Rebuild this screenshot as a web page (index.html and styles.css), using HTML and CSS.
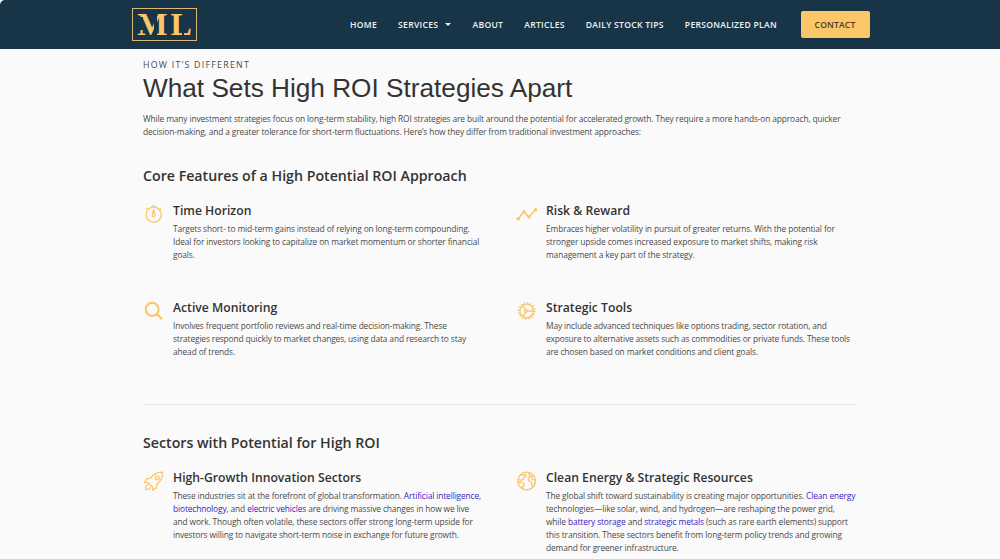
FILE: index.html
```html
<!DOCTYPE html>
<html lang="en">
<head>
  <meta charset="UTF-8">
  <meta name="viewport" content="width=device-width, initial-scale=1.0">
  <title>High ROI Strategies</title>
  <link rel="stylesheet" href="styles.css">
</head>
<body>
  <header class="header">
    <a class="logo" href="#"><span class="logo-m">M</span><span class="logo-l">L</span></a>
    <nav class="nav">
      <a href="#">HOME</a>
      <a href="#">SERVICES <span class="caret"></span></a>
      <a href="#">ABOUT</a>
      <a href="#">ARTICLES</a>
      <a href="#">DAILY STOCK TIPS</a>
      <a href="#">PERSONALIZED PLAN</a>
    </nav>
    <a class="contact-button" href="#">CONTACT</a>
  </header>

  <main class="content">
    <div class="eyebrow">HOW IT’S DIFFERENT</div>
    <h1>What Sets High ROI Strategies Apart</h1>
    <p class="intro">While many investment strategies focus on long-term stability, high ROI strategies are built around the potential for accelerated growth. They require a more hands-on approach, quicker<br>decision-making, and a greater tolerance for short-term fluctuations. Here’s how they differ from traditional investment approaches:</p>

    <h2>Core Features of a High Potential ROI Approach</h2>
    <div class="features">
      <div class="feature">
        <svg class="icon" viewBox="0 0 22 22">
          <circle cx="10.7" cy="11.7" r="7.6"/>
          <path d="M8.7 2.9h4M4.5 6.2L3.3 5M16.9 6.2L18.1 5M10.7 6.5L9.4 11.8a1.4 1.4 0 1 0 2.6 0z"/>
        </svg>
        <div>
          <h3>Time Horizon</h3>
          <p>Targets short- to mid-term gains instead of relying on long-term compounding.<br>Ideal for investors looking to capitalize on market momentum or shorter financial<br>goals.</p>
        </div>
      </div>
      <div class="feature">
        <svg class="icon" viewBox="0 0 22 22">
          <path class="thick" d="M2.2 15.8L8 8.7l5 5.3 6.6-7.2"/>
          <g class="solid"><circle cx="2.2" cy="15.8" r="1.8"/><circle cx="8" cy="8.7" r="1.6"/><circle cx="13" cy="14" r="1.7"/><circle cx="19.6" cy="6.8" r="1.7"/></g>
        </svg>
        <div>
          <h3>Risk &amp; Reward</h3>
          <p>Embraces higher volatility in pursuit of greater returns. With the potential for<br>stronger upside comes increased exposure to market shifts, making risk<br>management a key part of the strategy.</p>
        </div>
      </div>
      <div class="feature">
        <svg class="icon" viewBox="0 0 22 22">
          <circle class="bold" cx="9.2" cy="9.3" r="6.5"/>
          <path class="bold" d="M13.9 14l5.2 5.2"/>
        </svg>
        <div>
          <h3>Active Monitoring</h3>
          <p>Involves frequent portfolio reviews and real-time decision-making. These<br>strategies respond quickly to market changes, using data and research to stay<br>ahead of trends.</p>
        </div>
      </div>
      <div class="feature">
        <svg class="icon" viewBox="0 0 22 22">
          <circle cx="10.7" cy="11" r="6.8"/>
          <circle class="teeth" cx="10.7" cy="11" r="8.1"/>
          <circle cx="10" cy="11" r="1.3"/>
          <path d="M11.3 11h6.2M9.4 9.9L7.2 5.2M9.4 12.1l-2.2 4.7"/>
        </svg>
        <div>
          <h3>Strategic Tools</h3>
          <p>May include advanced techniques like options trading, sector rotation, and<br>exposure to alternative assets such as commodities or private funds. These tools<br>are chosen based on market conditions and client goals.</p>
        </div>
      </div>
    </div>

    <hr>

    <h2>Sectors with Potential for High ROI</h2>
    <div class="features">
      <div class="feature">
        <svg class="icon" viewBox="0 0 22 22">
          <path d="M19.6 2.2C14 2 10.6 4 7.5 8.2L3.6 8.8 1.5 12.4l3.6.2 4.2 4.2.4 3.5 3.5-2.4.7-3.9C18 11 19.8 7.8 19.6 2.2z"/>
          <circle cx="14.2" cy="7.7" r="1.9"/>
          <path d="M5.4 14.4c-2 .2-2.9 2.2-2.9 5.1 3 0 5-.8 5.2-2.8"/>
        </svg>
        <div>
          <h3>High-Growth Innovation Sectors</h3>
          <p>These industries sit at the forefront of global transformation. <a href="#">Artificial intelligence</a>,<br><a href="#">biotechnology</a>, and <a href="#">electric vehicles</a> are driving massive changes in how we live<br>and work. Though often volatile, these sectors offer strong long-term upside for<br>investors willing to navigate short-term noise in exchange for future growth.</p>
        </div>
      </div>
      <div class="feature">
        <svg class="icon" viewBox="0 0 22 22">
          <circle cx="10.6" cy="11" r="8.8"/>
          <path d="M4.5 4.9l2.7.2 2.4-.8.5 2.2-2.3 1-.5 2-2.6.8-2.6-1.1M2.3 12l3.5.3 2.6 1.7-.7 2.1-1.5 1-.2 1.6M13.8 2.9l-1.1 1.9 1.7 1.5-2.2 2.2.7 2.7 2.6.8.3 3.2 1.2 1.7 1.6-2.3.2-2.6M17 5l-1.7 2 1 2.3 2.8.8"/>
        </svg>
        <div>
          <h3>Clean Energy &amp; Strategic Resources</h3>
          <p>The global shift toward sustainability is creating major opportunities. <a href="#">Clean energy</a><br>technologies—like solar, wind, and hydrogen—are reshaping the power grid,<br>while <a href="#">battery storage</a> and <a href="#">strategic metals</a> (such as rare earth elements) support<br>this transition. These sectors benefit from long-term policy trends and growing<br>demand for greener infrastructure.</p>
        </div>
      </div>
    </div>
  </main>
</body>
</html>
```
FILE: styles.css
```css
:root {
  --navy: #183548;
  --gold: #fac668;
  --page: #fafafa;
  --heading: #333333;
  --text: #4a4a4a;
  --link: #3a22c4;
}

* {
  box-sizing: border-box;
}

body {
  margin: 0;
  height: 559px;
  overflow: hidden;
  background: var(--page);
  color: var(--text);
  font-family: "Open Sans", "Noto Sans", sans-serif;
}

a {
  text-decoration: none;
}

.header {
  display: flex;
  align-items: center;
  height: 49px;
  padding-left: 132px;
  background: var(--navy);
  border-top-left-radius: 5px;
}

.logo {
  display: flex;
  justify-content: center;
  align-items: center;
  gap: 3px;
  width: 65px;
  height: 33px;
  border: 1.5px solid #d9b878;
  color: var(--gold);
  font-family: "Liberation Serif", serif;
  font-size: 32px;
  font-weight: bold;
  line-height: 31px;
}

.logo span {
  position: relative;
}

/* stencil gaps in the letters */
.logo-m::before,
.logo-m::after,
.logo-l::after {
  content: '';
  position: absolute;
  background: var(--navy);
}

.logo-m::before {
  top: 8px;
  left: 2px;
  width: 4px;
  height: 13px;
}

.logo-m::after {
  top: 4px;
  left: 17px;
  width: 3px;
  height: 24px;
}

.logo-l::after {
  top: 18px;
  left: 12px;
  width: 2px;
  height: 10px;
}

.nav {
  display: flex;
  gap: 21px;
  width: 450.5px;
  margin-left: 153px;
  font-size: 8.6px;
  font-weight: 600;
  letter-spacing: 0.28px;
  white-space: nowrap;
}

.nav a {
  color: #eef3f5;
}

.caret {
  display: inline-block;
  margin: 0 0 2px 4.7px;
  border: 3px solid transparent;
  border-top-color: #eef3f5;
  border-bottom: 0;
}

.contact-button {
  width: 69px;
  height: 27px;
  border-radius: 2px;
  background: var(--gold);
  color: #4b3b20;
  font-size: 8.6px;
  font-weight: 600;
  letter-spacing: 0.15px;
  line-height: 28px;
  text-align: center;
}

.content {
  width: 714px;
  margin-left: 143px;
  padding-top: 10px;
  white-space: nowrap;
}

.eyebrow {
  font-size: 8.8px;
  letter-spacing: 1.27px;
  line-height: 13px;
}

h1 {
  margin: 0;
  color: var(--heading);
  font-family: "Liberation Sans", Arial, sans-serif;
  font-size: 26.2px;
  font-weight: normal;
  line-height: 32px;
}

p {
  margin: 0;
  font-size: 8.4px;
  letter-spacing: -0.13px;
  line-height: 13px;
}

.intro {
  margin-top: 8px;
}

h2 {
  margin: 28px 0 0;
  color: var(--heading);
  font-size: 14.2px;
  font-weight: 600;
  line-height: 20px;
}

.features {
  display: grid;
  grid-template-columns: 341px 341px;
  gap: 39.5px 32px;
  margin-top: 17px;
}

.feature {
  display: grid;
  grid-template-columns: 22px 1fr;
  gap: 8px;
}

.feature h3 {
  margin: 0 0 2.5px;
  color: var(--heading);
  font-size: 12.2px;
  font-weight: 600;
  line-height: 16px;
}

.icon {
  width: 22px;
  height: 22px;
  fill: none;
  stroke: var(--gold);
  stroke-width: 1.3;
  stroke-linejoin: round;
}

.icon .thick {
  stroke-width: 1.6;
}

.icon .bold {
  stroke-width: 2.1;
}

.icon .solid {
  fill: var(--gold);
  stroke: none;
}

.icon .teeth {
  stroke-width: 1.8;
  stroke-dasharray: 1.4 1.78;
}

p a {
  color: var(--link);
}

hr {
  margin: 46.5px 0 0;
  border: 0;
  border-top: 1px solid #e3e3e3;
}
```
